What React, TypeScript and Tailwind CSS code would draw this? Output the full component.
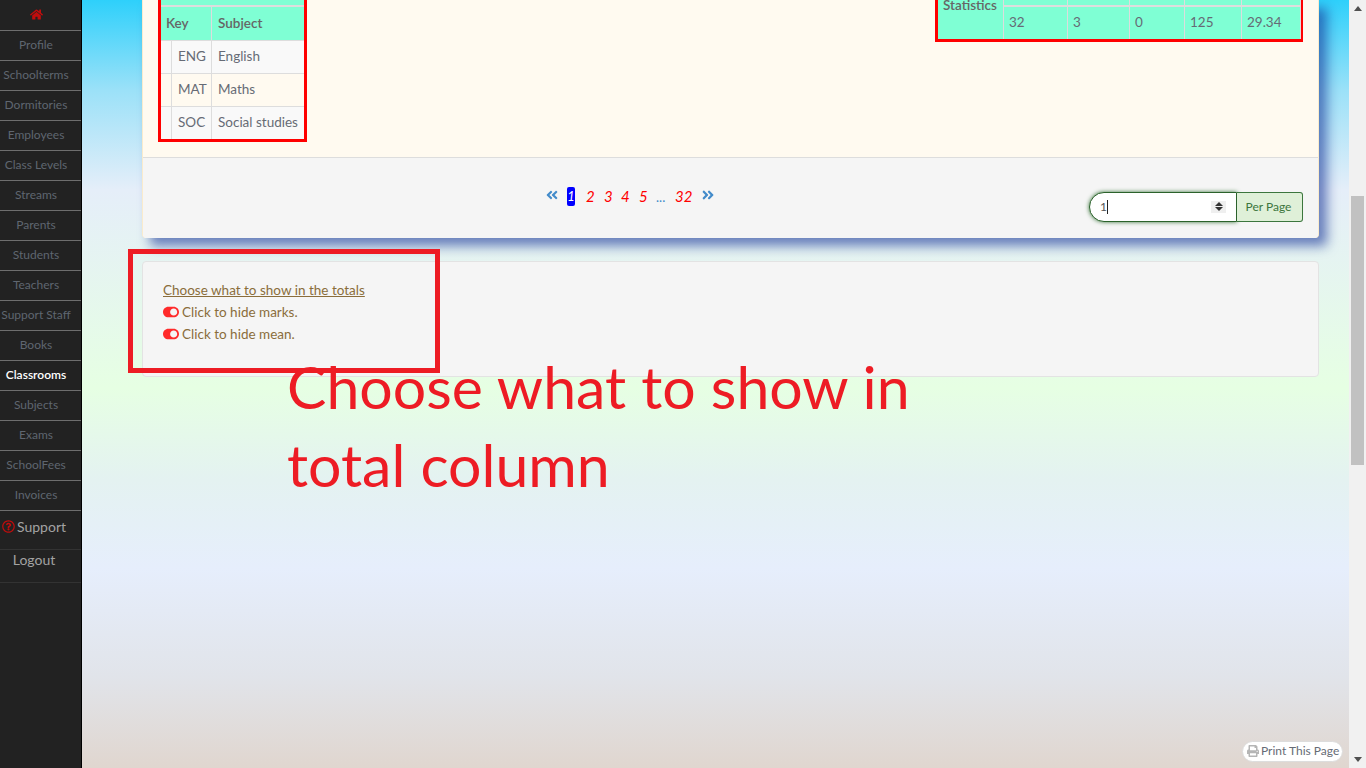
import React from "react";
import { FaAngleDoubleLeft, FaAngleDoubleRight, FaHome, FaPrint, FaRegQuestionCircle, FaToggleOn } from "react-icons/fa";

const navItems = [
  "Profile",
  "Schoolterms",
  "Dormitories",
  "Employees",
  "Class Levels",
  "Streams",
  "Parents",
  "Students",
  "Teachers",
  "Support Staff",
  "Books",
  "Classrooms",
  "Subjects",
  "Exams",
  "SchoolFees",
  "Invoices",
];

const subjects = [
  { key: "ENG", name: "English", bg: "bg-[#f9f9f9]" },
  { key: "MAT", name: "Maths", bg: "bg-[#fffaf0]" },
  { key: "SOC", name: "Social studies", bg: "bg-[#f9f9f9]" },
];

const stats = [
  { value: "32", w: "w-[64px]" },
  { value: "3", w: "w-[62px]" },
  { value: "0", w: "w-[55px]" },
  { value: "125", w: "w-[57px]" },
  { value: "29.34", w: "w-[59px]" },
];

function Sidebar() {
  return (
    <aside className="w-[82px] shrink-0 bg-[#222222] border-r border-black text-center text-[12px]">
      <div className="h-[31px] flex items-center justify-center border-b border-[#6e6e6e] pb-[1px] pr-[9px]">
        <FaHome className="text-[#c00d0d] text-[13px]" />
      </div>
      {navItems.map((item) => (
        <div
          key={item}
          className={
            "h-[30px] flex items-center justify-center border-b border-[#6e6e6e] pr-[9px] pb-[2px] " +
            (item === "Classrooms" ? "text-white font-semibold" : "text-[#5f6670]")
          }
        >
          {item}
        </div>
      ))}
      <div className="h-[39px] flex items-center pl-[2px] pb-[8px] gap-[2px] border-b border-[#333333] text-[14px] text-[#a3a3a3]">
        <FaRegQuestionCircle className="text-[#c00d0d] text-[13px]" />
        Support
      </div>
      <div className="h-[33px] pr-[13px] leading-[20px] border-b border-[#333333] text-[14px] text-[#a3a3a3]">Logout</div>
    </aside>
  );
}

function KeyTable() {
  return (
    <div className="border-[3px] border-t-0 border-[#ff0000] w-[149px] h-[142px] ml-[15px] text-[13.5px] overflow-hidden">
      <div className="h-[7px] bg-[#7fffd4] border-b-2 border-[#dddddd]" />
      <div className="h-[34px] flex items-center bg-[#7fffd4] font-semibold text-[#666666] border-b border-[#dddddd]">
        <div className="w-[51px] pl-[5px] pb-[1px] border-r border-[#dddddd] h-full flex items-center">Key</div>
        <div className="pl-[6px] pb-[1px]">Subject</div>
      </div>
      {subjects.map((s) => (
        <div key={s.key} className={"h-[33px] flex border-b border-[#dddddd] text-[#666b75] " + s.bg}>
          <div className="w-[11px] border-r border-[#dddddd]" />
          <div className="w-[40px] pl-[6px] pb-[2px] border-r border-[#dddddd] flex items-center">{s.key}</div>
          <div className="pl-[6px] pb-[2px] flex items-center whitespace-nowrap">{s.name}</div>
        </div>
      ))}
    </div>
  );
}

function StatsTable() {
  return (
    <div className="border-[3px] border-t-0 border-[#ff0000] w-[368px] h-[42px] mr-[15px] bg-[#7fffd4] text-[13.5px] text-[#666b75] flex">
      <div className="w-[66px] shrink-0 font-semibold text-[#666666] pl-[5px] leading-[11px] border-r border-[#dddddd]">
        Statistics
      </div>
      <div className="flex-1">
        <div className="h-[7px] border-b-2 border-[#dddddd] flex">
          {stats.map((s) => (
            <div key={s.value} className={"border-r border-[#dddddd] " + s.w} />
          ))}
        </div>
        <div className="h-[32px] flex items-center">
          {stats.map((s) => (
            <div key={s.value} className={"h-full flex items-center pl-[5px] pb-[2px] border-r border-[#dddddd] " + s.w}>
              {s.value}
            </div>
          ))}
        </div>
      </div>
    </div>
  );
}

function Pagination() {
  return (
    <div className="absolute left-[403px] top-[27px] flex items-center text-[15px] italic text-[#ff0000]">
      <FaAngleDoubleLeft className="text-[#428bca] text-[14px] w-[12px] mr-[9px] -mt-[3px]" />
      <span className="bg-[#0000ff] text-white rounded-[2px] w-[8px] h-[19px] flex items-center justify-center text-[13px] mr-[11px]">1</span>
      <span className="w-[18px]">2</span>
      <span className="w-[17px]">3</span>
      <span className="w-[18px]">4</span>
      <span className="w-[17px]">5</span>
      <span className="not-italic text-[#428bca] w-[19px] pt-[2px] text-[13px]">...</span>
      <span className="w-[22px]">32</span>
      <FaAngleDoubleRight className="text-[#428bca] text-[14px] ml-[4px] -mt-[3px]" />
    </div>
  );
}

export default function App() {
  return (
    <div className="relative w-[1366px] h-[768px] overflow-hidden flex font-['Lato',sans-serif] bg-[#f1f1f1]">
      <Sidebar />

      <main className="relative w-[1267px] shrink-0 bg-[linear-gradient(180deg,#2ed0fb_0px,#9be1f8_90px,#e5eef9_190px,#e6ffe3_388px,#e4f2f1_480px,#e6eefc_568px,#e1e4ea_676px,#e0d6cf_768px)] pl-[60px] pr-[30px]">
        {/* Results panel */}
        <section className="h-[238px] rounded-b-[4px] bg-[#fffaf0] border-x border-[#faebcc] shadow-[8px_8px_12px_rgba(20,50,150,0.6)]">
          <div className="h-[157px] flex justify-between items-start">
            <KeyTable />
            <StatsTable />
          </div>
          <div className="relative h-[81px] bg-[#f5f5f5] border-t border-[#dddddd] rounded-b-[4px]">
            <Pagination />
            <div className="absolute right-[15px] top-[34px] flex h-[30px] text-[12px]">
              <div className="w-[148px] rounded-l-[15px] bg-white border border-[#2b622b] shadow-[0_0_4px_#3c763d] flex items-center pl-[10px] pr-[10px] pb-[1px] text-[#555555]">
                <span>1</span>
                <span className="w-[1px] h-[14px] bg-[#222222]" />
                <span className="ml-auto w-[15px] h-[12px] bg-[#efefef] flex flex-col items-center justify-center gap-[1px]">
                  <span className="border-x-[4px] border-x-transparent border-b-[4px] border-b-[#333333]" />
                  <span className="border-x-[4px] border-x-transparent border-t-[4px] border-t-[#333333]" />
                </span>
              </div>
              <div className="w-[66px] flex items-center justify-center pb-[1px] pr-[2px] bg-[#dff0d8] border border-l-0 border-[#3c763d] rounded-r-[3px] text-[#3c763d]">
                Per Page
              </div>
            </div>
          </div>
        </section>

        {/* Totals options */}
        <section className="mt-[23px] h-[116px] bg-[#f5f5f5] border border-[#e3e3e3] rounded-[4px] pl-[20px] pt-[17px] text-[13.5px] leading-[22px] text-[#8a6d3b]">
          <div className="underline">Choose what to show in the totals</div>
          <div className="flex items-center gap-[3px]">
            <FaToggleOn className="text-[#ff2a2a] text-[16px]" />
            Click to hide marks.
          </div>
          <div className="flex items-center gap-[3px]">
            <FaToggleOn className="text-[#ff2a2a] text-[16px]" />
            Click to hide mean.
          </div>
        </section>

        {/* Annotation over the panel */}
        <div className="absolute left-[46px] top-[249px] w-[312px] h-[124px] border-[5px] border-[#ed1c24]" />
        <div className="absolute left-[205px] top-[348px] w-[650px] text-[59px] leading-[78px] text-[#ed1c24]">
          Choose what to show in total column
        </div>

        <div className="absolute right-[6px] bottom-[6px] w-[101px] h-[21px] pl-[4px] pb-[1px] flex items-center gap-[2px] rounded-full bg-white border border-[#dddddd] text-[12px] text-[#666b75] whitespace-nowrap">
          <FaPrint className="text-[#b5b5b5]" />
          Print This Page
        </div>
      </main>

      {/* Scrollbar */}
      <div className="w-[17px] shrink-0 bg-[#f1f1f1] flex flex-col items-center justify-between py-[6px]">
        <span className="border-x-[4px] border-x-transparent border-b-[5px] border-b-[#505050]" />
        <span className="border-x-[4px] border-x-transparent border-t-[5px] border-t-[#505050]" />
      </div>
      <div className="absolute right-[2px] top-[196px] w-[13px] h-[269px] bg-[#c1c1c1]" />
    </div>
  );
}
